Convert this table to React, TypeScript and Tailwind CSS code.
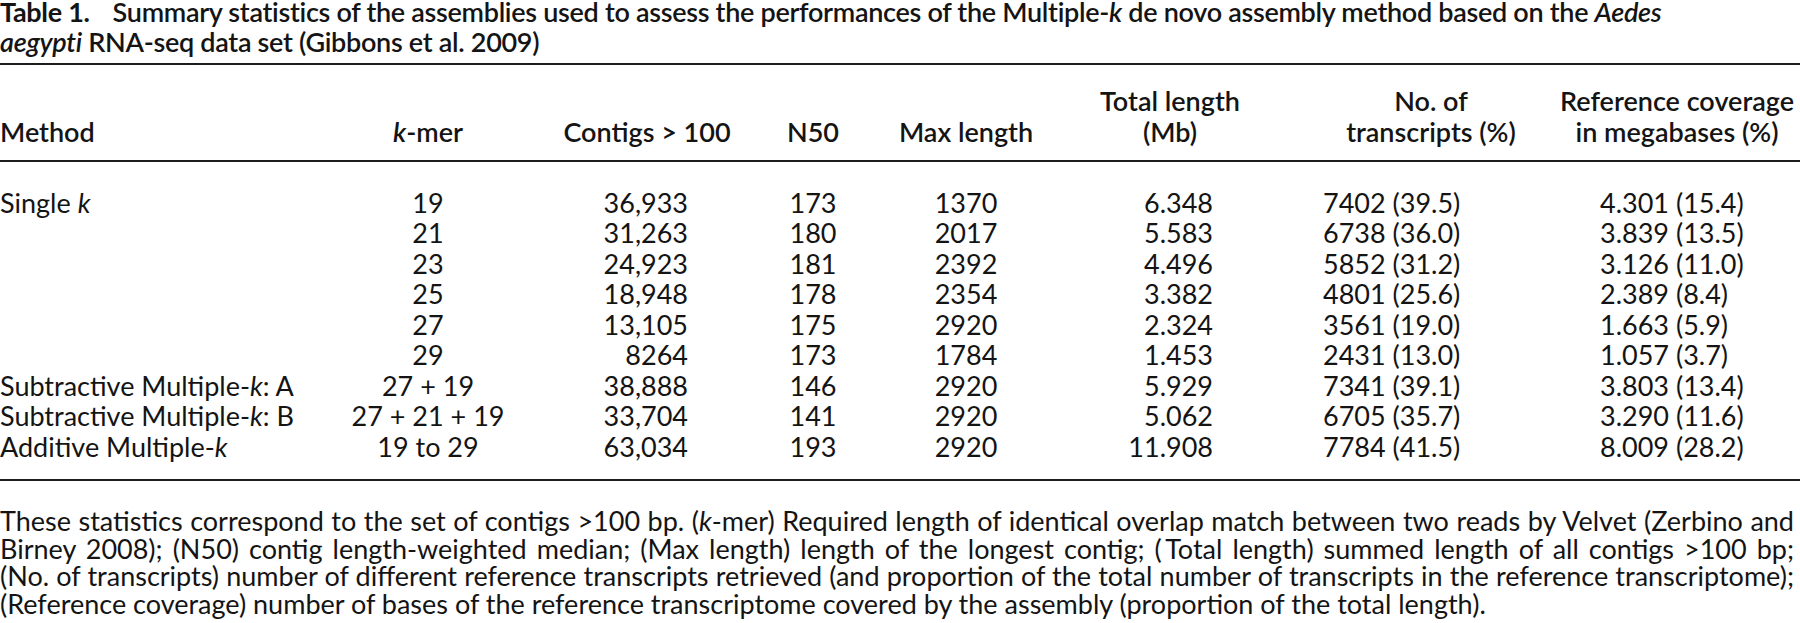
import React from "react";

// column geometry: width of the slot, how the header sits, how the values sit
const cols = [
  { w: "w-[340px]", head: "items-start", body: "text-left" },
  { w: "w-[176px]", head: "items-center", body: "text-center" },
  { w: "w-[262px]", head: "items-center", body: "text-right pr-[90px]" },
  { w: "w-[70px]", head: "items-center", body: "text-center" },
  { w: "w-[236px]", head: "items-center", body: "text-center" },
  { w: "w-[216px]", head: "items-center pr-[44px]", body: "text-right pr-[87px]" },
  { w: "w-[262px]", head: "items-center", body: "text-left pl-[23px]" },
  { w: "w-[230px]", head: "items-center", body: "text-left pl-[38px]" },
];

const headers: React.ReactNode[][] = [
  ["Method"],
  [<><i>k</i>-mer</>],
  ["Contigs > 100"],
  ["N50"],
  ["Max length"],
  ["Total length", "(Mb)"],
  ["No. of", "transcripts (%)"],
  ["Reference coverage", "in megabases (%)"],
];

const rows: React.ReactNode[][] = [
  [<>Single <i>k</i></>, "19", "36,933", "173", "1370", "6.348", "7402 (39.5)", "4.301 (15.4)"],
  ["", "21", "31,263", "180", "2017", "5.583", "6738 (36.0)", "3.839 (13.5)"],
  ["", "23", "24,923", "181", "2392", "4.496", "5852 (31.2)", "3.126 (11.0)"],
  ["", "25", "18,948", "178", "2354", "3.382", "4801 (25.6)", "2.389 (8.4)"],
  ["", "27", "13,105", "175", "2920", "2.324", "3561 (19.0)", "1.663 (5.9)"],
  ["", "29", "8264", "173", "1784", "1.453", "2431 (13.0)", "1.057 (3.7)"],
  [<>Subtractive Multiple-<i>k</i>: A</>, "27 + 19", "38,888", "146", "2920", "5.929", "7341 (39.1)", "3.803 (13.4)"],
  [<>Subtractive Multiple-<i>k</i>: B</>, "27 + 21 + 19", "33,704", "141", "2920", "5.062", "6705 (35.7)", "3.290 (11.6)"],
  [<>Additive Multiple-<i>k</i></>, "19 to 29", "63,034", "193", "2920", "11.908", "7784 (41.5)", "8.009 (28.2)"],
];

const Rule = () => <div className="h-[2px] w-full bg-[#1c1c1c]" />;

export default function App() {
  return (
    <div className="w-[1800px] h-[623px] overflow-hidden bg-white text-[#141414] font-['Lato','Liberation_Sans',sans-serif] text-[27px]">
      {/* caption */}
      <div className="-mt-[3px] h-[66px] leading-[30px] font-semibold whitespace-nowrap tracking-[-0.3px]">
        <div>
          <span className="font-bold">Table 1.</span>
          <span className="inline-block w-[23px]" />
          Summary statistics of the assemblies used to assess the performances of the Multiple-<i>k</i> de novo assembly method based on the <i>Aedes</i>
        </div>
        <div>
          <i>aegypti</i> RNA-seq data set (Gibbons et al. 2009)
        </div>
      </div>

      <Rule />

      {/* column heads */}
      <div className="flex pt-[20px] pb-[13px] font-semibold leading-[31px] whitespace-nowrap">
        {headers.map((lines, i) => (
          <div key={i} className={`flex flex-col justify-end h-[62px] ${cols[i].w} ${cols[i].head}`}>
            {lines.map((l, j) => (
              <span key={j}>{l}</span>
            ))}
          </div>
        ))}
      </div>

      <div className="h-[1.5px] w-full bg-[#1c1c1c]" />

      {/* body */}
      <div className="pt-[26px] pb-[17px] tabular-nums whitespace-nowrap">
        {rows.map((r, i) => (
          <div key={i} className="flex h-[30.5px] leading-[30.5px]">
            {r.map((c, j) => (
              <div key={j} className={`${cols[j].w} ${cols[j].body}`}>
                {c}
              </div>
            ))}
          </div>
        ))}
      </div>

      <Rule />

      {/* footnote */}
      <div className="mt-[26px] w-[1794px] leading-[27.5px] whitespace-nowrap">
        <div className="text-justify [text-align-last:justify]">
          These statistics correspond to the set of contigs &gt;100 bp. (<i>k</i>-mer) Required length of identical overlap match between two reads by Velvet (Zerbino and
        </div>
        <div className="text-justify [text-align-last:justify]">
          Birney 2008); (N50) contig length-weighted median; (Max length) length of the longest contig; ({"\u2009"}Total length) summed length of all contigs &gt;100 bp;
        </div>
        <div className="text-justify [text-align-last:justify]">
          (No. of transcripts) number of different reference transcripts retrieved (and proportion of the total number of transcripts in the reference transcriptome);
        </div>
        <div>
          (Reference coverage) number of bases of the reference transcriptome covered by the assembly (proportion of the total length).
        </div>
      </div>
    </div>
  );
}
